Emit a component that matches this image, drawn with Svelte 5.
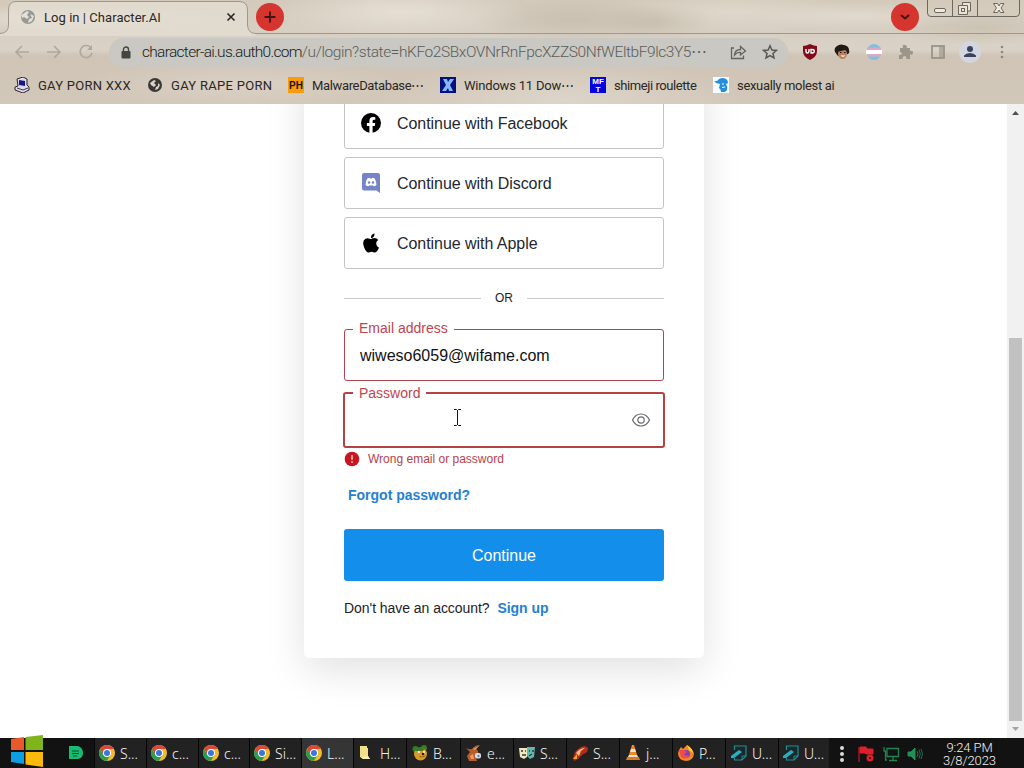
<script>
    const bookmarks = [
        { icon: 'pc', label: 'GAY PORN XXX', width: 93, spacing: 0.25 },
        { icon: 'globe', label: 'GAY RAPE PORN', width: 101, spacing: 0.3 },
        { icon: 'ph', label: 'MalwareDatabase⋯', width: 112, spacing: -0.35 },
        { icon: 'x', label: 'Windows 11 Dow⋯', width: 110, spacing: -0.2 },
        { icon: 'mft', label: 'shimeji roulette', width: 83, spacing: -0.42 },
        { icon: 'face', label: 'sexually molest ai', width: 97, spacing: -0.33 }
    ];

    const tasks = [
        { icon: 'chrome', label: 'S...', width: 52 },
        { icon: 'chrome', label: 'c...', width: 52 },
        { icon: 'chrome', label: 'c...', width: 51 },
        { icon: 'chrome', label: 'Si...', width: 52 },
        { icon: 'chrome', label: 'L...', width: 52, active: true },
        { icon: 'folder', label: 'H...', width: 53, wide: true },
        { icon: 'bear', label: 'B...', width: 54, wide: true },
        { icon: 'rabbit', label: 'e...', width: 53, wide: true },
        { icon: 'masks', label: 'S...', width: 53, wide: true },
        { icon: 'rocket', label: 'S...', width: 53, wide: true },
        { icon: 'cone', label: 'j...', width: 53, wide: true },
        { icon: 'firefox', label: 'P...', width: 53, wide: true },
        { icon: 'note', label: 'U...', width: 53, wide: true },
        { icon: 'note', label: 'U...', width: 51 }
    ];

    const providers = ['Facebook', 'Discord', 'Apple'];

    let email = 'wiweso6059@wifame.com';
    let password = '';
</script>

<div class="screen">
    <header class="chrome">
        <div class="tabstrip">
            <svg class="tab-shape" width="1024" height="36" viewBox="0 0 1024 36">
                <path class="tab-fill" d="M0 34Q8 33 8 25V10Q8 1.500 16 1.500H239Q247.500 1.500 247.500 10V25Q248 33 256 33.500V36H0Z" />
                <path class="tab-line" d="M0 33.500Q8.500 33 8.500 25V10Q8.500 1.500 16 1.500H239Q247.500 1.500 247.500 10V25Q248 33.500 256 33.500H1024" />
            </svg>
            <div class="tab">
                <svg width="16" height="16" viewBox="0 0 16 16"><circle cx="8" cy="8" r="7" fill="#979994" /><path d="M3 5L7 2L9 3L7 6L9 8L7 10L4 8L2 9L1.500 6ZM10 5L14 7L12 12L8 14L9 10L12 9Z" fill="#e6e1d6" /></svg>
                <span class="tab-title">Log in | Character.AI</span>
                <svg width="10" height="10" viewBox="0 0 10 10"><path d="M1.500 1.500L8.500 8.500M8.500 1.500L1.500 8.500" stroke="#282622" stroke-width="1.600" /></svg>
            </div>
            <div class="round new-tab"><svg width="14" height="14" viewBox="0 0 14 14"><path d="M7 1.500V12.500M1.500 7H12.500" stroke="#401512" stroke-width="1.800" /></svg></div>
            <div class="round search-tabs"><svg width="12" height="8" viewBox="0 0 12 8"><path d="M2 2L6 5.500L10 2" fill="none" stroke="#441310" stroke-width="2" /></svg></div>
            <svg class="window-buttons" width="94" height="18" viewBox="0 0 94 18" fill="none" stroke="#6d675d">
                <path d="M.5 0V13Q.5 16.500 4 16.500H89Q92.500 16.500 92.500 13V0M25.500 0V16M50.500 0V16" />
                <rect x="7.500" y="8.500" width="11" height="4" rx="1.500" fill="#eee9df" />
                <path d="M35.500 5V2.500H43.500V11H40.500M31.500 5.500H40.500V14.500H31.500Z" fill="#e8e2d7" />
                <rect x="34.500" y="8.500" width="3" height="3" />
                <path d="M66.500 3.500H70.500L72 6L73.500 3.500H77L74 8L77 12.500H73.500L72 10L70.500 12.500H66.500L69.500 8Z" fill="#eee9df" />
            </svg>
        </div>

        <div class="toolbar">
            <div class="nav">
                <svg width="16" height="16" viewBox="0 0 16 16"><path d="M15 8H2M8 2L2 8L8 14" /></svg>
                <svg width="16" height="16" viewBox="0 0 16 16"><path d="M1 8H14M8 2L14 8L8 14" /></svg>
                <svg width="16" height="16" viewBox="0 0 16 16"><path d="M13 4A6 6 0 1 0 14 9" /><path d="M14 1V6H9Z" class="solid" /></svg>
            </div>
            <div class="address">
                <svg width="10" height="13" viewBox="0 0 10 13"><path d="M2.500 6V3.500A2.500 2.500 0 0 1 7.500 3.500V6" fill="none" stroke="#444541" stroke-width="1.400" /><rect x=".5" y="5" width="9" height="7.500" rx="1" fill="#444541" /></svg>
                <span class="url"><span class="host">character-ai.us.auth0.com</span><span class="path">/u/login?state=hKFo2SBxOVNrRnFpcXZZS0NfWEltbF9lc3Y5⋯</span></span>
                <svg width="17" height="16" viewBox="0 0 17 16" fill="none" stroke="#63645f" stroke-width="1.300"><path d="M4 4H1.500V14.500H13.500V11.500" /><path d="M4.500 11Q5 5.500 10.500 5.500V2.500L15.500 7L10.500 11V8.500Q7 8 4.500 11Z" /></svg>
                <svg class="star" width="16" height="16" viewBox="0 0 16 16"><path d="M8 1.800L9.900 6L14.400 6.400L11 9.400L12 14L8 11.600L4 14L5 9.400L1.600 6.400L6.100 6Z" fill="none" stroke="#585854" stroke-width="1.500" /></svg>
            </div>
            <div class="extensions">
                <svg width="16" height="18" viewBox="0 0 16 18"><path d="M8 1Q12 3 15 3V8Q15 14 8 17Q1 14 1 8V3Q4 3 8 1Z" fill="#820b19" /><path d="M4 6V8.500Q4 10 5.300 10T7 8.500V6" fill="none" stroke="#fff" stroke-width="1.400" /><path d="M9 6.500H10Q12.300 6.500 12.300 8.200T10 10H9Z" fill="none" stroke="#fff" stroke-width="1.300" /></svg>
                <svg width="16" height="16" viewBox="0 0 16 16"><path d="M1 8Q-.5 4 3 2Q6-.5 10 1Q15 2 15 6Q16 9 14 10L4 12Z" fill="#211914" /><ellipse cx="8.500" cy="9.500" rx="4.500" ry="5.500" fill="#bd805f" /><path d="M3 8Q4 3 9 4Q13 4 13.500 8L11 6Q7 7 3 8Z" fill="#211914" /><path d="M6 8.500H7.500M10 8.500H11.500" stroke="#241713" /><path d="M6.500 11.500Q9 14 11.500 11.500Z" fill="#fff" /></svg>
                <svg width="16" height="16" viewBox="0 0 16 16"><path d="M3 2Q8-2 13 2L15 5H1Z" fill="#80bfdf" /><rect x="1" y="3.500" width="14" height="3" fill="#dfa8c4" /><rect y="6" width="16" height="4" fill="#fff" /><rect x="1" y="10" width="14" height="2.500" fill="#dfa8c4" /><path d="M2 12.500H14Q12 16 8 16T2 12.500Z" fill="#80bfdf" /></svg>
                <svg width="16" height="16" viewBox="0 0 16 16"><path d="M2 4H5Q4 0 7 1T8.500 4H12V7Q15.500 6 15 9T12 10V15H8.500Q8.500 12 6.500 12T4.500 15H1V11Q4 11 4 9L2 8Z" fill="#9c968a" /></svg>
                <svg width="16" height="16" viewBox="0 0 16 16"><rect x="2" y="2" width="12" height="12" fill="none" stroke="#9a9489" stroke-width="1.800" /><path d="M9 2H14V14H9Z" fill="#9a9489" opacity=".6" /></svg>
                <svg width="22" height="22" viewBox="0 0 22 22"><circle cx="11" cy="11" r="11" fill="#d3d5df" /><circle cx="11" cy="8" r="3" fill="#394261" /><path d="M5 16V14.500Q7 12 11 12T17 14.500V16Z" fill="#394261" /></svg>
                <svg width="4" height="16" viewBox="0 0 4 16" fill="#8d877c"><circle cx="2" cy="3" r="1.300" /><circle cx="2" cy="8" r="1.300" /><circle cx="2" cy="13" r="1.300" /></svg>
            </div>
        </div>

        <nav class="bookmarks">
            {#each bookmarks as mark}
                <div class="bookmark">
                    <svg width="16" height="16" viewBox="0 0 16 16">
                        {#if mark.icon === 'pc'}
                            <path d="M3 2L9 0L13 2V8L15 10V13L9 16L1 13V10L4 9Z" fill="#ddd9e8" stroke="#29252c" />
                            <path d="M5 3L11 4V9L5 8Z" fill="#17178c" /><path d="M3 11L9 13L14 11" fill="none" stroke="#403a4a" />
                        {:else if mark.icon === 'globe'}
                            <circle cx="8" cy="8" r="7" fill="#3a3937" /><path d="M3 6L7 3L9 4L7 6L9 8L7 10L4 8ZM11 6L13 8L11 12L8 13L9 10L11 9Z" fill="#dcd2c2" />
                        {:else if mark.icon === 'ph'}
                            <rect width="16" height="16" fill="#f99b0d" /><text x="8" y="12" text-anchor="middle" class="ph">PH</text>
                        {:else if mark.icon === 'x'}
                            <rect width="16" height="16" fill="#03107e" /><path d="M3 2H7L8 5L10 2H14L10 8L13 14H9L8 11L6 14H2L6 8Z" fill="#86b7fa" />
                        {:else if mark.icon === 'mft'}
                            <rect width="16" height="16" fill="#0404dc" /><text x="8" y="6.500" text-anchor="middle" class="mft">MF</text><text x="8" y="15" text-anchor="middle" class="mft">T</text>
                        {:else}
                            <rect width="16" height="16" fill="#f6fbff" /><path d="M1 4Q4 5 6 2Q10 0 13 2Q15 3 15 6L13 7Q15 10 14 13L12 15H8Q8 12 6 11L7 7L3 6Z" fill="#258fdd" /><path d="M9 7H11M9 10.500L12 10" stroke="#fff" />
                        {/if}
                    </svg>
                    <span class="label" style="width: {mark.width}px; letter-spacing: {mark.spacing}px">{mark.label}</span>
                </div>
            {/each}
        </nav>
    </header>

    <main class="viewport">
        <div class="page">
            <section class="card">
                {#each providers as provider}
                    <button class="provider">
                        <svg width="20" height="20" viewBox="0 0 20 20">
                            {#if provider === 'Facebook'}
                                <circle cx="10" cy="10" r="10" /><path d="M8.400 20V12.900H5.900V10H8.400V7.800Q8.400 4 12.100 4Q13.300 4 14.300 4.200V6.700H13Q11.600 6.700 11.600 8.100V10H14.200L13.800 12.900H11.600V20Z" fill="#fff" />
                            {:else if provider === 'Discord'}
                                <path d="M3 0H17Q19 0 19 2V20L15.500 17.500H3Q1 17.500 1 15.500V2Q1 0 3 0Z" fill="#7484c6" />
                                <path d="M6.500 5.200L8.500 4.700L9 5.500H11L11.500 4.700L13.500 5.200Q15.500 8 15.500 12Q14 13.300 12.600 13.300L11.700 12.300Q10 12.700 8.300 12.300L7.400 13.300Q6 13.300 4.500 12Q4.500 8 6.500 5.200Z" fill="#fff" />
                                <circle cx="8" cy="9.500" r="1.200" fill="#7484c6" /><circle cx="12" cy="9.500" r="1.200" fill="#7484c6" />
                            {:else}
                                <path d="M13.500.5Q13.700 4.500 10 5Q9.700 1.500 13.500.5ZM10.200 6Q11.500 5 13.400 5Q15.900 5 17.300 7Q15 8.400 15.200 10.800Q15.300 13.500 18 14.700Q15.600 20 13.100 19.500Q10.500 18.300 8.300 19.400Q5.600 20.400 3.200 14.800Q.6 8 4.500 5.800Q6.500 4.700 8.500 5.700Q9.400 6.200 10.200 6Z" />
                            {/if}
                        </svg>
                        <span>Continue with {provider}</span>
                    </button>
                {/each}

                <div class="or"><span>OR</span></div>

                <div class="field">
                    <label for="email">Email address</label>
                    <input id="email" type="text" bind:value={email} />
                </div>
                <div class="field focused">
                    <label for="password">Password</label>
                    <input id="password" type="password" bind:value={password} />
                    <svg width="20" height="16" viewBox="0 0 20 16" fill="none" stroke="#65676d" stroke-width="1.200"><path d="M1.500 8Q4.500 2 10 2T18.500 8Q15.500 14 10 14T1.500 8Z" /><circle cx="10" cy="8" r="3.200" /></svg>
                    <svg class="ibeam" width="9" height="17" viewBox="0 0 9 17"><path d="M1 .5H3.500L4.500 1.500L5.500.5H8M4.500 1V16M1 16.500H3.500L4.500 15.500L5.500 16.500H8" fill="none" stroke="#111" /></svg>
                </div>
                <p class="error">
                    <svg width="16" height="16" viewBox="0 0 16 16"><circle cx="8" cy="8" r="7.300" fill="#c91423" /><path d="M8 4V8.800M8 10.300V12" stroke="#f5c9a8" stroke-width="1.600" /></svg>
                    <span>Wrong email or password</span>
                </p>
                <a class="forgot" href="#forgot">Forgot password?</a>
                <button class="submit">Continue</button>
                <p class="signup">Don't have an account? <a href="#signup">Sign up</a></p>
            </section>
        </div>
        <div class="scrollbar">
            <svg width="17" height="17" viewBox="0 0 17 17"><path d="M5 11L8.500 7L12 11Z" fill="#505050" /></svg>
            <div class="thumb"></div>
            <svg width="17" height="17" viewBox="0 0 17 17"><path d="M5 6L8.500 10L12 6Z" fill="#a3a3a3" /></svg>
        </div>
    </main>

    <footer class="taskbar">
        <svg class="start" width="34" height="33" viewBox="0 0 34 33">
            <path d="M1 4L14 2V15H1Z" fill="#e9592b" /><path d="M15.500 2L33 0V15H15.500Z" fill="#7fb51b" />
            <path d="M1 17H14V29L1 27Z" fill="#0c9fe4" /><path d="M15.500 17H33V32L15.500 29.500Z" fill="#fab90b" />
        </svg>
        <svg class="pinned" width="16" height="14" viewBox="0 0 16 14"><path d="M1 0H10Q15 2 15 7T10 13H1Z" fill="#16bc72" /><path d="M4 5H11M4 7.500H11M5 10H9" stroke="#104c32" stroke-width="1.200" /></svg>
        <div class="tasks">
            {#each tasks as task}
                <div class="task" class:active={task.active} class:wide={task.wide} style="width: {task.width}px">
                    <svg width="16" height="16" viewBox="0 0 16 16">
                        {#if task.icon === 'chrome'}
                            <circle cx="8" cy="8" r="8" fill="#efbd2a" />
                            <path d="M1.100 4A8 8 0 0 1 14.900 4H8L4.500 10Z" fill="#d94a36" />
                            <path d="M1.100 4A8 8 0 0 0 7.800 16L11.500 10L4.500 10Z" fill="#2d9c50" />
                            <circle cx="8" cy="8" r="4" fill="#fff" /><circle cx="8" cy="8" r="3" fill="#3975dc" />
                        {:else if task.icon === 'folder'}
                            <path d="M1 1H8V3H9V11L11 14H4L1 12Z" fill="#eee187" /><path d="M2 12L9 11L11 14H4Z" fill="#f7f0b3" />
                        {:else if task.icon === 'bear'}
                            <circle cx="3.500" cy="4" r="3" fill="#347a27" /><circle cx="12" cy="3" r="3" fill="#417826" /><ellipse cx="8.500" cy="9" rx="6.500" ry="6.500" fill="#d79b2b" /><path d="M2 5Q7 0 13 4L10 6H4Z" fill="#397c25" /><circle cx="7" cy="7" r="1" fill="#fff" /><circle cx="12" cy="7" r="1" fill="#fff" /><path d="M7 11Q10 14 14 10L10 12Z" fill="#3e1d0c" /><circle cx="11" cy="9" r="1.200" fill="#34180b" />
                        {:else if task.icon === 'rabbit'}
                            <path d="M0 3Q4 5 6 4Q9 0 14 0L10 4Q13 6 12 9L9 11L11 16H3L1 11L4 7Z" fill="#b95e2b" /><path d="M7 4L13 1L9 5ZM4 11L7 9L8 14H5Z" fill="#e5a165" /><rect x="9" y="8" width="6" height="5.500" rx="2" fill="#d8dde5" /><circle cx="12.500" cy="11" r="1.200" fill="#7a8291" />
                        {:else if task.icon === 'masks'}
                            <path d="M0 3H8V12L5 14L1 12Z" fill="#efe7c0" /><path d="M8 2H16L15 12L11 14L8 11Z" fill="#63b9b0" /><path d="M2 6H4M6 6H7M3 10H7M10 6H11M13 6H15M10 11L13 9" stroke="#323935" stroke-width="1.300" />
                        {:else if task.icon === 'rocket'}
                            <path d="M1 13L3 7Q8 1 13 1L16 3Q16 8 11 9L6 14L2 16Z" fill="#ba291a" /><path d="M4 8Q8 3 13 3L9 6L7 11Z" fill="#f0bd86" /><path d="M1 14L5 9L5 14Z" fill="#f2a12a" />
                        {:else if task.icon === 'cone'}
                            <path d="M7 0H9L13 13H3Z" fill="#ef8a22" /><path d="M6 4H10L11 7H5ZM4 10H12L13 12H3Z" fill="#e9e3da" /><path d="M2 12H14L15 15H1Z" fill="#de761a" />
                        {:else if task.icon === 'firefox'}
                            <path d="M1 5L3 2L5 4L9 0Q15 4 16 9Q15 16 8 16Q0 15 0 8Z" fill="#f58425" /><path d="M9 0Q15 4 15 8L11 5Z" fill="#ffd03a" /><circle cx="8" cy="9" r="4" fill="#7545c4" /><path d="M1 5L6 5L9 7L6 9Q8 12 12 10Q8 16 3 12Z" fill="#ee4a4b" />
                        {:else}
                            <path d="M3.500 5V1H15V11L11 15H3.500V13" fill="#17292b" stroke="#258b95" stroke-width="1.200" /><path d="M0 11L8 5L11 7L3 13H0Z" fill="#28b0c2" /><path d="M11 15V11H15" fill="none" stroke="#258b95" />
                        {/if}
                    </svg>
                    <span>{task.label}</span>
                </div>
            {/each}
        </div>
        <div class="tray">
            <svg width="6" height="18" viewBox="0 0 6 18" fill="#dadada"><circle cx="3" cy="3" r="2" /><circle cx="3" cy="9" r="2" /><circle cx="3" cy="15" r="2" /></svg>
            <svg class="flag" width="18" height="16" viewBox="0 0 18 16"><path d="M1 1V16M2 1H8L9 3H15V8H8L7 7H2Z" fill="#df1f2b" stroke="#df1f2b" /><circle cx="12" cy="12" r="3.500" fill="#df1f2b" /><path d="M11 11L13 13M13 11L11 13" stroke="#46070b" /></svg>
            <svg width="17" height="16" viewBox="0 0 17 16" fill="none" stroke="#22834e" stroke-width="1.300"><path d="M4 2.500H15.500V10.500H4ZM10 11V14M6 14.500H14M1 1V5H3M2.500 5V14H4" /></svg>
            <svg width="17" height="14" viewBox="0 0 17 14" fill="none" stroke="#1f9355"><path d="M1 5H4L8 1V13L4 9H1Z" fill="#1f9355" /><path d="M10 4Q12 7 10 10M12 2.500Q14.500 7 12 11.500M14 2Q17 7 14 12" opacity=".75" /></svg>
        </div>
        <div class="clock"><span>9:24 PM</span><span>3/8/2023</span></div>
    </footer>
</div>

<style>
    :global(body) {
        margin: 0;
        overflow: hidden;
    }

    .screen {
        width: 1024px;
        height: 768px;
        display: flex;
        flex-direction: column;
        font-family: "Liberation Sans", Arial, sans-serif;
        color: #1e212a;
        background: #fff;
    }

    svg {
        display: block;
        flex: none;
    }

    .chrome {
        height: 104px;
        flex: none;
        font-family: Roboto, sans-serif;
        font-weight: 300;
        color: #2b2723;
        background:
            radial-gradient(ellipse at 72px 18px, rgba(235, 230, 219, 0.7), transparent 150px),
            radial-gradient(ellipse 60px 18px at 655px 22px, rgba(184, 173, 155, 0.4), transparent),
            radial-gradient(ellipse 110px 14px at 860px 16px, rgba(233, 226, 215, 0.6), transparent),
            radial-gradient(ellipse 90px 16px at 980px 28px, rgba(188, 177, 160, 0.4), transparent),
            radial-gradient(ellipse 130px 26px at 400px 12px, rgba(231, 225, 214, 0.9), transparent),
            radial-gradient(ellipse 100px 24px at 575px 20px, rgba(190, 180, 163, 0.55), transparent),
            radial-gradient(ellipse 120px 20px at 735px 12px, rgba(226, 218, 206, 0.8), transparent),
            radial-gradient(ellipse 180px 40px at 560px 100px, rgba(226, 218, 208, 0.7), transparent),
            radial-gradient(ellipse 160px 24px at 240px 84px, rgba(222, 212, 200, 0.7), transparent),
            linear-gradient(180deg, #d3cabb 0, #d9d2c6 50px, #cfc4b6 56px, #d2c8ba 104px);
    }

    .tabstrip {
        position: relative;
        height: 34px;
        display: flex;
        align-items: flex-start;
    }

    .tab-shape {
        position: absolute;
        top: 0;
        left: 0;
    }

    .tab-fill {
        fill: rgba(230, 225, 214, 0.65);
    }

    .tab-line {
        fill: none;
        stroke: #9e978b;
    }

    .tab {
        position: relative;
        display: flex;
        align-items: center;
        width: 236px;
        height: 34px;
        box-sizing: border-box;
        padding-left: 20px;
    }

    .tab-title {
        width: 184px;
        margin-left: 8px;
        font-size: 13px;
        letter-spacing: 0.05px;
        white-space: pre;
        font-weight: 400;
    }

    .round {
        position: relative;
        display: flex;
        align-items: center;
        justify-content: center;
        width: 28px;
        height: 28px;
        margin-top: 3px;
        border-radius: 50%;
        background: #d5342f;
    }

    .new-tab {
        margin-left: 20px;
    }

    .search-tabs {
        margin-left: auto;
    }

    .window-buttons {
        margin: 0 3px 0 8px;
        position: relative;
    }

    .toolbar {
        height: 36px;
        display: flex;
        align-items: center;
    }

    .nav {
        display: flex;
        gap: 16px;
        width: 95px;
        padding-left: 14px;
    }

    .nav svg {
        fill: none;
        stroke: #aea89d;
        stroke-width: 1.6;
    }

    .nav .solid {
        fill: #aea89d;
        stroke: none;
    }

    .address {
        display: flex;
        align-items: center;
        width: 679px;
        height: 29px;
        box-sizing: border-box;
        padding: 0 10px 0 12px;
        border-radius: 15px;
        background: #c9c8c2;
    }

    .url {
        width: 572px;
        margin: 0 16px 0 11px;
        font-size: 15.5px;
        white-space: nowrap;
    }

    .host {
        color: #191a19;
        letter-spacing: -0.7px;
    }

    .path {
        color: #5c5d59;
        letter-spacing: -0.42px;
    }

    .star {
        margin-left: 15px;
    }

    .extensions {
        flex: 1;
        display: flex;
        align-items: center;
        padding-left: 14px;
        gap: 16px;
    }

    .extensions svg:nth-child(6) {
        margin: 0 3px 0 -3px;
    }

    .bookmarks {
        display: flex;
        align-items: center;
        gap: 16px;
        height: 30px;
        padding-left: 14px;
    }

    .bookmark {
        display: flex;
        align-items: center;
        gap: 8px;
        font-size: 13px;
        white-space: nowrap;
        font-weight: 400;
    }

    .ph {
        font: bold 10px "Liberation Sans", sans-serif;
        fill: #1d1408;
    }

    .mft {
        font: bold 8px "Liberation Sans", sans-serif;
        fill: #fff;
    }

    .viewport {
        height: 634px;
        display: flex;
        overflow: hidden;
    }

    .page {
        width: 1007px;
        box-sizing: border-box;
        padding-left: 304px;
        overflow: hidden;
    }

    .card {
        width: 400px;
        height: 601px;
        margin-top: -47px;
        padding: 40px 40px 0;
        box-sizing: border-box;
        border-radius: 5px;
        background: #fff;
        box-shadow: 0 12px 40px rgba(0, 0, 0, 0.12);
    }

    .provider {
        display: flex;
        align-items: center;
        gap: 16px;
        width: 320px;
        height: 52px;
        margin: 0 0 8px;
        padding: 0 16px;
        border: 1px solid #c2c4c8;
        border-radius: 3px;
        background: #fff;
        font: 16px "Liberation Sans", Arial, sans-serif;
        color: #25272e;
    }

    .provider span {
        padding-top: 2px;
        letter-spacing: -0.05px;
    }

    .or {
        display: flex;
        align-items: center;
        height: 20px;
        margin: 16px 0 21px;
        padding-top: 3px;
        font-size: 12px;
    }

    .or::before,
    .or::after {
        content: "";
        flex: 1;
        height: 1px;
        background: #c9cbd0;
    }

    .or span {
        width: 46px;
        text-align: center;
    }

    .field {
        position: relative;
        display: flex;
        align-items: center;
        height: 52px;
        box-sizing: border-box;
        padding: 0 12px 0 15px;
        border: 1px solid #b0454f;
        border-radius: 3px;
    }

    .field label {
        position: absolute;
        top: -11px;
        left: 8px;
        padding: 0 6px;
        background: #fff;
        color: #bf4450;
        font-size: 14px;
        line-height: 18px;
    }

    .field input {
        flex: 1;
        min-width: 0;
        padding: 2px 0 0;
        border: 0;
        outline: 0;
        background: none;
        font: 16px "Liberation Sans", Arial, sans-serif;
        color: #101114;
    }

    .focused {
        height: 56px;
        margin: 11px -1px 0;
        border: 2px solid #b54343;
    }

    .focused label {
        top: -10px;
    }

    .ibeam {
        position: absolute;
        left: 108px;
        top: 15px;
    }

    .error {
        display: flex;
        align-items: center;
        gap: 8px;
        height: 16px;
        margin: 3px 0 0;
        color: #b6424d;
        font-size: 12px;
    }

    .forgot {
        display: block;
        margin: 20px 0 26px 4px;
        line-height: 16px;
        font-size: 14px;
    }

    a {
        color: #2580d0;
        font-weight: bold;
        text-decoration: none;
    }

    .submit {
        display: block;
        width: 320px;
        height: 52px;
        padding: 2px 0 0;
        border: 0;
        border-radius: 3px;
        background: #138eea;
        color: #fff;
        font: 16px "Liberation Sans", Arial, sans-serif;
    }

    .signup {
        margin: 19px 0 0;
        font-size: 14px;
        line-height: 16px;
        letter-spacing: -0.05px;
    }

    .signup a {
        margin-left: 4px;
    }

    .scrollbar {
        width: 17px;
        display: flex;
        flex-direction: column;
        background: #f1f1f1;
    }

    .thumb {
        width: 13px;
        height: 383px;
        margin: auto 2px 0;
        background: #c1c1c1;
    }

    .taskbar {
        display: flex;
        height: 30px;
        background: #121212;
        color: #f4f4f4;
        font-family: "Noto Sans", sans-serif;
        font-weight: 300;
    }

    .start {
        position: relative;
        top: -3px;
        margin-left: 10px;
    }

    .pinned {
        margin: 8px 10px 0 24px;
    }

    .tasks {
        display: flex;
        width: 735px;
    }

    .task {
        display: flex;
        align-items: center;
        gap: 5px;
        box-sizing: border-box;
        padding-left: 4px;
        border-left: 1px solid #050505;
        background: #222223;
        font-size: 14px;
        white-space: nowrap;
    }

    .task.active {
        background: #353536;
    }

    .wide {
        padding-left: 5px;
    }

    .tray {
        display: flex;
        align-items: center;
        gap: 7px;
        width: 103px;
        padding: 2px 0 0 10px;
        box-sizing: border-box;
    }

    .flag {
        margin-left: 6px;
    }

    .clock {
        display: flex;
        flex-direction: column;
        align-items: center;
        width: 75px;
        padding-top: 3px;
        font-family: Roboto, sans-serif;
        font-size: 13px;
        line-height: 13px;
        letter-spacing: -0.1px;
    }
</style>
